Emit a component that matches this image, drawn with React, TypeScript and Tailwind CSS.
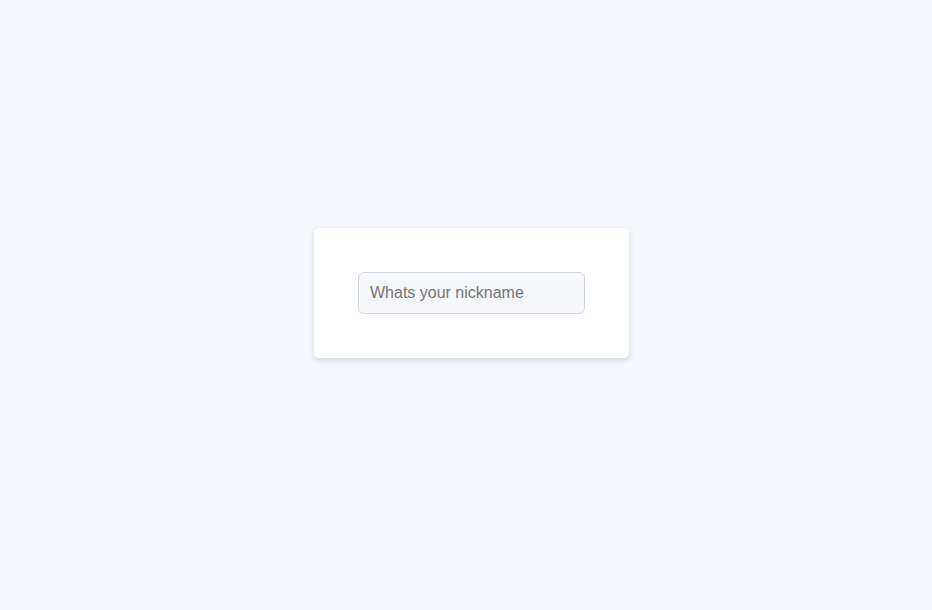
import React from "react";

export default function App() {
  return (
    <div className="w-[932px] h-[610px] bg-[#f4f7fc] flex items-center justify-center font-['Liberation_Sans',Arial,sans-serif]">
      <div className="bg-white rounded-[5px] shadow-[0_3px_6px_rgba(0,0,0,0.12)] p-[44px] w-[315px] h-[130px] ml-[11px] -mt-[24px]">
        <input
          type="text"
          placeholder="Whats your nickname"
          className="w-[227px] h-[42px] rounded-[6px] border border-[#d0d4dc] bg-[#f5f7fb] px-[11px] text-[16px] text-[#333] placeholder:text-[#757575] outline-none font-['Liberation_Sans',Arial,sans-serif]"
        />
      </div>
    </div>
  );
}
